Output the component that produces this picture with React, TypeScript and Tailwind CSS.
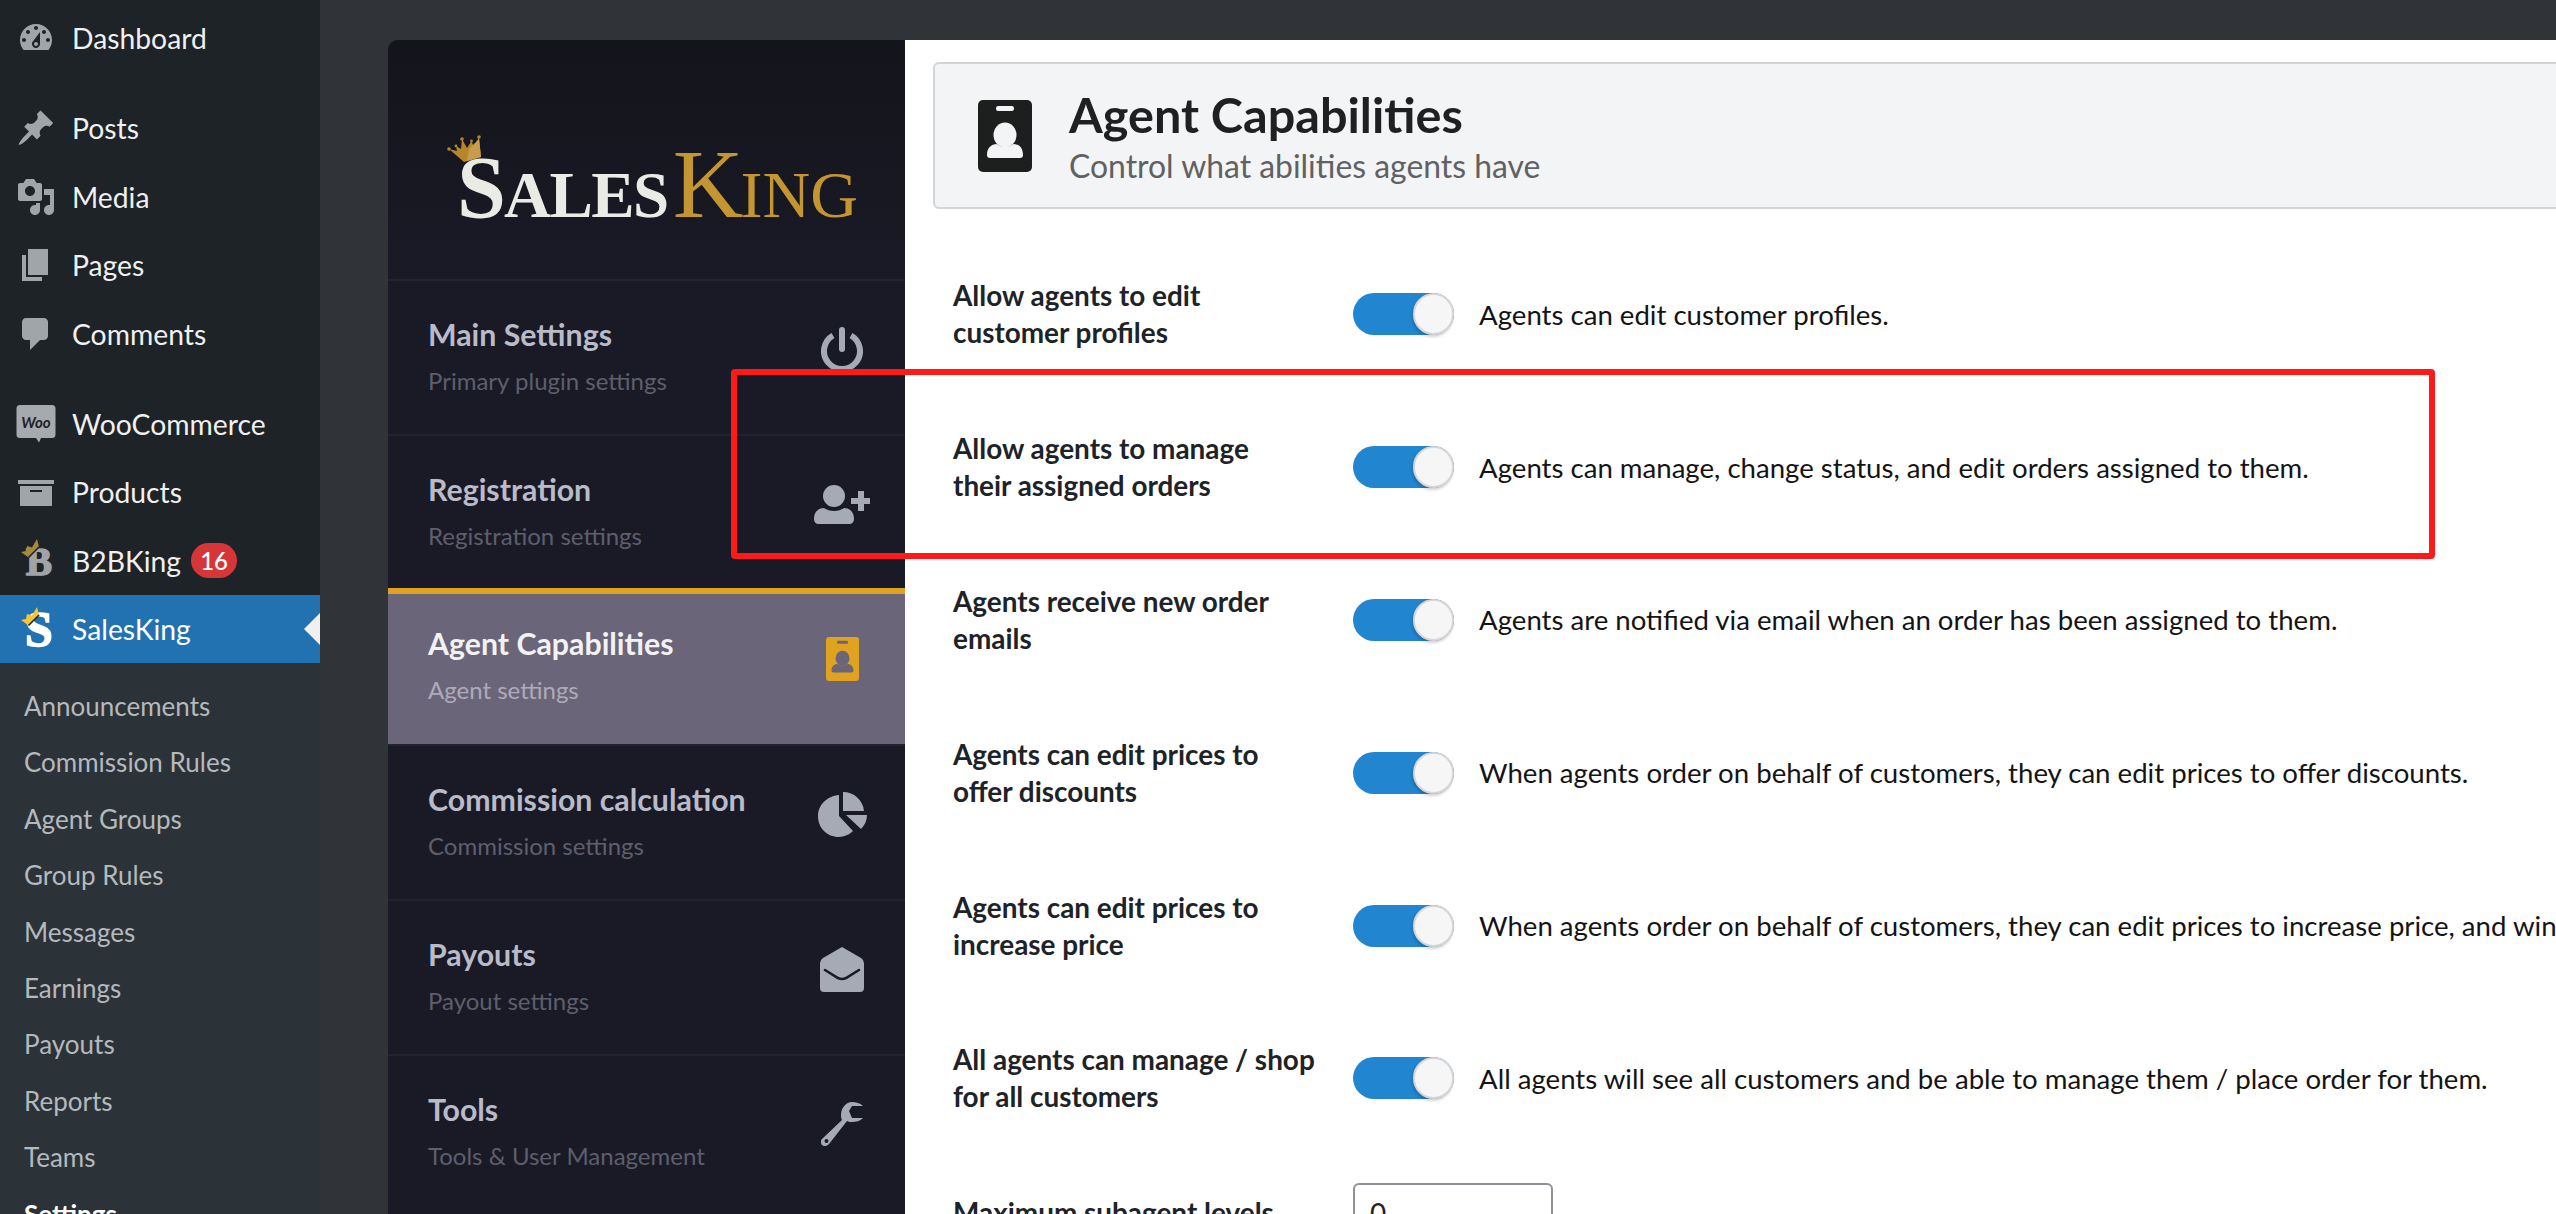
import React from "react";

const D = ({ d }: { d: string }) => (
  <svg viewBox="0 0 20 20" className="h-10 w-10 shrink-0" fill="currentColor">
    <path d={d} />
  </svg>
);

const dash = {
  dashboard:
    "M3.76 16h12.48c1.1-1.37 1.76-3.11 1.76-5 0-4.42-3.58-8-8-8s-8 3.58-8 8c0 1.89.66 3.63 1.76 5zM10 4c.55 0 1 .45 1 1s-.45 1-1 1-1-.45-1-1 .45-1 1-1zM6 6c.55 0 1 .45 1 1s-.45 1-1 1-1-.45-1-1 .45-1 1-1zm8 0c.55 0 1 .45 1 1s-.45 1-1 1-1-.45-1-1 .45-1 1-1zm-5.37 5.55L12 7v6c0 1.1-.9 2-2 2s-2-.9-2-2c0-.57.24-1.08.63-1.45zM4 10c.55 0 1 .45 1 1s-.45 1-1 1-1-.45-1-1 .45-1 1-1zm12 0c.55 0 1 .45 1 1s-.45 1-1 1-1-.45-1-1 .45-1 1-1zm-5 3c0-.55-.45-1-1-1s-1 .45-1 1 .45 1 1 1 1-.45 1-1z",
  pin: "M10.44 3.02l1.82-1.82 6.36 6.35-1.83 1.82c-1.05-.68-2.48-.57-3.41.36l-.75.75c-.92.93-1.04 2.35-.35 3.41l-1.83 1.82-2.41-2.41-2.8 2.79c-.42.42-3.38 2.71-3.8 2.29s1.86-3.39 2.28-3.81l2.79-2.79L4.1 9.36l1.83-1.82c1.05.69 2.48.57 3.41-.36l.75-.75c.93-.92 1.04-2.35.35-3.41z",
  media:
    "M13 11V4c0-.55-.45-1-1-1h-1.67L9 1H5L3.67 3H2c-.55 0-1 .45-1 1v7c0 .55.45 1 1 1h10c.55 0 1-.45 1-1zM7 4.5c1.38 0 2.5 1.12 2.5 2.5S8.38 9.5 7 9.5 4.5 8.38 4.5 7 5.62 4.5 7 4.5zM14 6h5v10.5c0 1.38-1.12 2.5-2.5 2.5S14 17.88 14 16.5s1.12-2.5 2.5-2.5c.17 0 .34.02.5.05V9h-3V6zm-4 8.05V13h2v3.5c0 1.38-1.12 2.5-2.5 2.5S7 17.88 7 16.5 8.12 14 9.5 14c.17 0 .34.02.5.05z",
  page: "M6 15V2h10v13H6zm-1 1h8v2H3V5h2v11z",
  comment:
    "M5 2h9c1.1 0 2 .9 2 2v7c0 1.1-.9 2-2 2h-2l-5 5v-5H5c-1.1 0-2-.9-2-2V4c0-1.1.9-2 2-2z",
  archive: "M19 4v2H1V4h18zM2 7h16v10H2V7zm11 3V9H7v1h6z",
};

const WooIcon = () => (
  <svg viewBox="0 0 40 40" className="h-10 w-10 shrink-0">
    <path
      d="M4 1h32a3.500 3.500 0 0 1 3.500 3.500v26a3.500 3.500 0 0 1-3.500 3.500h-11l-2 4.500-3-4.500H4a3.500 3.500 0 0 1-3.500-3.500v-26A3.500 3.500 0 0 1 4 1z"
      fill="#a7aaad"
    />
    <text x="20" y="23.5" textAnchor="middle" fontSize="15" fontWeight="700" fontStyle="italic" fill="#1d2327" fontFamily="Lato, sans-serif">
      Woo
    </text>
  </svg>
);

const KingIcon = ({
  letter,
  fill,
  crown,
  notch,
  size,
  base,
}: {
  letter: string;
  fill: string;
  crown: string;
  notch: string;
  size: number;
  base: number;
}) => (
  <svg viewBox="0 0 40 40" className="h-10 w-10 shrink-0 overflow-visible">
    <text x="23" y={base} textAnchor="middle" fontSize={size} fontWeight="900" fill={fill} stroke={fill} strokeWidth="1.6" fontFamily="'Liberation Serif', serif">
      {letter}
    </text>
    <path d="M12.500 16.500 L5 11 L10 10 L11 5 L16 6.500 L21 -2 L23 6 Z" fill={crown} />
    <path d="M12.500 16.500 L23 6" stroke={notch} strokeWidth="1.6" />
  </svg>
);

const topMenu: { label: string; icon: React.ReactNode; gap?: boolean; badge?: string }[] = [
  { label: "Dashboard", icon: <D d={dash.dashboard} /> },
  { label: "Posts", icon: <D d={dash.pin} />, gap: true },
  { label: "Media", icon: <D d={dash.media} /> },
  { label: "Pages", icon: <D d={dash.page} /> },
  { label: "Comments", icon: <D d={dash.comment} /> },
  { label: "WooCommerce", icon: <WooIcon />, gap: true },
  { label: "Products", icon: <D d={dash.archive} /> },
  { label: "B2BKing", icon: <KingIcon letter="B" size={39} base={34} fill="#a0a4a8" crown="#a58a3a" notch="#1d2327" />, badge: "16" },
];

const subMenu = ["Announcements", "Commission Rules", "Agent Groups", "Group Rules", "Messages", "Earnings", "Payouts", "Reports", "Teams"];

const PowerIcon = () => (
  <svg viewBox="0 0 42 44" className="h-[44px] w-[42px]" fill="none" stroke="currentColor" strokeWidth="6">
    <path d="M12 8.500a18 18 0 1 0 18 0" />
    <path d="M21 3v19" strokeLinecap="round" />
  </svg>
);
const UserPlusIcon = () => (
  <svg viewBox="0 0 56 39" className="h-[39px] w-[56px]" fill="currentColor">
    <circle cx="20" cy="11" r="11" />
    <path d="M0 34c0-7 4-11 10-11 3 2 6 3 10 3s7-1 10-3c6 0 10 4 10 11 0 3-2 5-5 5H5c-3 0-5-2-5-5z" />
    <path d="M44 6h6v7h6v6h-6v7h-6v-7h-7v-6h7z" />
  </svg>
);
const BadgeIcon = ({ cls, hole }: { cls: string; hole: string }) => (
  <svg viewBox="0 0 54 72" className={cls}>
    <rect width="54" height="72" rx="5" fill="currentColor" />
    <rect x="18" y="6" width="18" height="5" rx="2.200" fill={hole} />
    <ellipse cx="27" cy="35" rx="11.500" ry="12.500" fill={hole} />
    <path d="M9 55c0-7 4-11 10-11 2 2 5 3 8 3s6-1 8-3c6 0 10 4 10 11 0 2-1 3-3 3H12c-2 0-3-1-3-3z" fill={hole} />
  </svg>
);
const PieIcon = () => (
  <svg viewBox="0 0 49 45" className="h-[45px] w-[49px]" fill="currentColor">
    <path d="M21 3v21l14 15a21 21 0 0 1-14 6C9 45 0 36 0 24 0 13 9 4 21 3z" />
    <path d="M25 0c11 0 20 8 21 19H25z" />
    <path d="M28 23h21c0 5-2 10-6 14z" />
  </svg>
);
const EnvelopeIcon = () => (
  <svg viewBox="0 0 44 45" className="h-[45px] w-[44px]">
    <path d="M22 0 L41 11 Q44 13 44 16 V41 Q44 45 40 45 H4 Q0 45 0 41 V16 Q0 13 3 11 Z" fill="currentColor" />
    <path d="M5 23 L18 31 Q22 33 26 31 L39 23" fill="none" stroke="#1a1a27" strokeWidth="2.600" strokeLinecap="round" />
  </svg>
);
const WrenchIcon = () => (
  <svg viewBox="0 0 42 44" className="h-[44px] w-[42px]" fill="currentColor">
    <path fillRule="evenodd" d="M31 0c4 0 8 1 11 4H31l-3 5 3 7h11c-3 3-7 4-11 4-2 0-3 0-5-1L8 42c-3 3-6 2-7 1s-2-4 0-6l20-19c-1-2-1-3-1-5C20 6 25 0 31 0zM5.500 37a2 2 0 1 0 0 4 2 2 0 0 0 0-4z" />
  </svg>
);

const navItems = [
  { title: "Main Settings", sub: "Primary plugin settings", icon: <PowerIcon />, h: "h-[155px]" },
  { title: "Registration", sub: "Registration settings", icon: <UserPlusIcon />, h: "h-[154px]" },
  {
    title: "Agent Capabilities",
    sub: "Agent settings",
    icon: <BadgeIcon cls="h-[44px] w-[33px]" hole="#6b6579" />,
    h: "h-[156px]",
    active: true,
  },
  { title: "Commission calculation", sub: "Commission settings", icon: <PieIcon />, h: "h-[155px]" },
  { title: "Payouts", sub: "Payout settings", icon: <EnvelopeIcon />, h: "h-[155px]" },
  { title: "Tools", sub: "Tools & User Management", icon: <WrenchIcon />, h: "h-[155px]" },
];

const rows: [string, string, string][] = [
  ["Allow agents to edit", "customer profiles", "Agents can edit customer profiles."],
  ["Allow agents to manage", "their assigned orders", "Agents can manage, change status, and edit orders assigned to them."],
  ["Agents receive new order", "emails", "Agents are notified via email when an order has been assigned to them."],
  ["Agents can edit prices to", "offer discounts", "When agents order on behalf of customers, they can edit prices to offer discounts."],
  ["Agents can edit prices to", "increase price", "When agents order on behalf of customers, they can edit prices to increase price, and win commission on the difference."],
  ["All agents can manage / shop", "for all customers", "All agents will see all customers and be able to manage them / place order for them."],
];

const Toggle = () => (
  <div className="relative h-[42px] w-[101px] shrink-0 rounded-full bg-[#2185d0]">
    <div className="absolute right-0 top-0 h-[42px] w-[41px] rounded-full border-2 border-[#d6d6d6] bg-[#f6f6f6] shadow-[-1px_2px_3px_rgba(0,0,0,0.18)]" />
  </div>
);

export default function App() {
  return (
    <div className="relative flex h-[1214px] w-[2556px] overflow-hidden bg-[#303438] font-[family-name:Lato,sans-serif]">
      {/* WordPress admin menu */}
      <aside className="flex h-[1214px] w-[320px] shrink-0 flex-col overflow-hidden bg-[#1d2327]">
        <nav className="shrink-0 pt-[4px]">
          {topMenu.map((m) => (
            <div
              key={m.label}
              className={`flex h-[68.5px] items-center pl-[16px] text-[#f0f0f1] ${m.gap ? "mt-[21.5px]" : ""}`}
            >
              <span className="text-[#a0a5aa]">{m.icon}</span>
              <span className="ml-[16px] text-[28.3px] leading-none">{m.label}</span>
              {m.badge && (
                <span className="ml-[10px] flex h-[35px] w-[46px] items-center justify-center rounded-full bg-[#d63638] text-[24px] font-medium text-white">
                  {m.badge}
                </span>
              )}
            </div>
          ))}
        </nav>
        <div className="relative flex h-[68px] shrink-0 items-center bg-[#2271b1] pl-[16px] text-white">
          <KingIcon letter="S" size={50} base={37} fill="#ffffff" crown="#f5c533" notch="#1d2327" />
          <span className="ml-[16px] text-[28.3px] leading-none">SalesKing</span>
          <div className="absolute right-0 top-[18px] h-0 w-0 border-y-[16px] border-r-[16px] border-y-transparent border-r-[#f0f0f1]" />
        </div>
        <div className="flex-1 bg-[#2c3338] pt-[15px] pl-[24px] text-[26px] leading-[56.4px] text-[#b4b9be]">
          {subMenu.map((s) => (
            <div key={s}>{s}</div>
          ))}
          <div className="font-bold text-white">Settings</div>
        </div>
      </aside>

      {/* Page content */}
      <main className="flex flex-1 pl-[68px] pt-[40px]">
        <section className="flex flex-1 overflow-hidden rounded-tl-[10px]">
          {/* Plugin nav */}
          <div className="w-[517px] shrink-0 bg-[#1a1a27]">
            <div className="relative flex h-[239px] bg-linear-to-b from-[#14141b] to-[#1a1a27] pl-[69px] pt-[95px] font-[family-name:'Liberation_Serif',serif] leading-none">
              <svg viewBox="0 0 36 28" className="absolute left-[59px] top-[95px] h-[28px] w-[36px]">
                <path d="M2 14 L10 16 L9 11 L14 14 L15 4 L20 13 L24.500 6 L27 12 L32 2 L34 22 L17 27 Z" fill="#b8862a" />
                <path d="M22 14 L32 4 L34 22 L20 26 Z" fill="#c79c4a" />
                <circle cx="2" cy="14" r="1.800" fill="#b8862a" />
                <circle cx="9" cy="11" r="1.400" fill="#b8862a" />
                <circle cx="15" cy="4" r="1.800" fill="#b8862a" />
                <circle cx="24.500" cy="6" r="1.400" fill="#b8862a" />
                <circle cx="32" cy="2" r="1.800" fill="#b8862a" />
              </svg>
              <div className="flex items-baseline text-[#ebebe6]">
                <span className="text-[88px] font-bold tracking-[-2px]">S</span>
                <span className="text-[65px] font-bold tracking-[-1.5px]">ALES</span>
                <span className="ml-[5px] text-[98px] text-[#c39632] tracking-[-3px]">K</span>
                <span className="text-[66px] text-[#c39632]">ING</span>
              </div>
            </div>
            {navItems.map((n) => (
              <div
                key={n.title}
                className={`flex ${n.h} justify-between pl-[40px] pr-[33px] ${
                  n.active ? "border-t-[6px] border-t-[#e0a321] bg-[#6b6579]" : "border-t-2 border-t-[#23232f]"
                }`}
              >
                <div className={n.active ? "pt-[29px]" : "pt-[33px]"}>
                  <div className={`text-[30.3px] leading-[40px] font-bold ${n.active ? "text-[#f2f2f2]" : "text-[#b9bbc9]"}`}>
                    {n.title}
                  </div>
                  <div className={`mt-[7px] text-[24px] leading-[40px] ${n.active ? "text-[#aeabb9]" : "text-[#5e5e6c]"}`}>
                    {n.sub}
                  </div>
                </div>
                <div
                  className={`flex h-[60px] w-[60px] items-center justify-center ${
                    n.active ? "mt-[35px] text-[#e0a321]" : "mt-[38px] text-[#a5aab5]"
                  }`}
                >
                  {n.icon}
                </div>
              </div>
            ))}
          </div>

          {/* Settings */}
          <div className="min-w-0 flex-1 overflow-hidden bg-white pl-[28px] pt-[22px]">
            <header className="flex h-[147px] w-[1700px] items-center rounded-[6px] border-2 border-[#d4d4d5] bg-[#f3f4f5] pl-[43px]">
              <BadgeIcon cls="h-[72px] w-[54px] text-[#1d1f1e]" hole="#f3f4f5" />
              <div className="ml-[37px] mt-[3px]">
                <div className="text-[48.6px] leading-[52px] font-bold text-[#1f2021]">Agent Capabilities</div>
                <div className="mt-[5px] text-[31.9px] leading-[42px] text-[#5f6163]">Control what abilities agents have</div>
              </div>
            </header>
            <div className="mt-[29px]">
              {rows.map(([a, b, c]) => (
                <div key={a + b} className="flex h-[152.8px] items-center pl-[20px]">
                  <div className="w-[400px] shrink-0 text-[27.9px] leading-[37px] font-bold text-[#1d2327]">
                    <div>{a}</div>
                    <div>{b}</div>
                  </div>
                  <Toggle />
                  <div className="ml-[25px] text-[27.6px] whitespace-nowrap text-[#141414]">{c}</div>
                </div>
              ))}
              <div className="mt-[28px] flex h-[60px] items-center pl-[20px]">
                <div className="w-[400px] shrink-0 text-[27.9px] leading-[37px] font-bold text-[#1d2327]">
                  Maximum subagent levels
                </div>
                <input
                  readOnly
                  value="0"
                  className="h-[60px] w-[200px] rounded-[6px] border-2 border-[#8f9397] bg-white pl-[15px] text-[28px] text-[#222]"
                />
              </div>
            </div>
          </div>
        </section>
      </main>

      {/* Annotation laid over the screenshot */}
      <div className="pointer-events-none absolute left-[731px] top-[369px] h-[190px] w-[1704px] rounded-[4px] border-[6px] border-[#ff1a1a]" />
    </div>
  );
}
